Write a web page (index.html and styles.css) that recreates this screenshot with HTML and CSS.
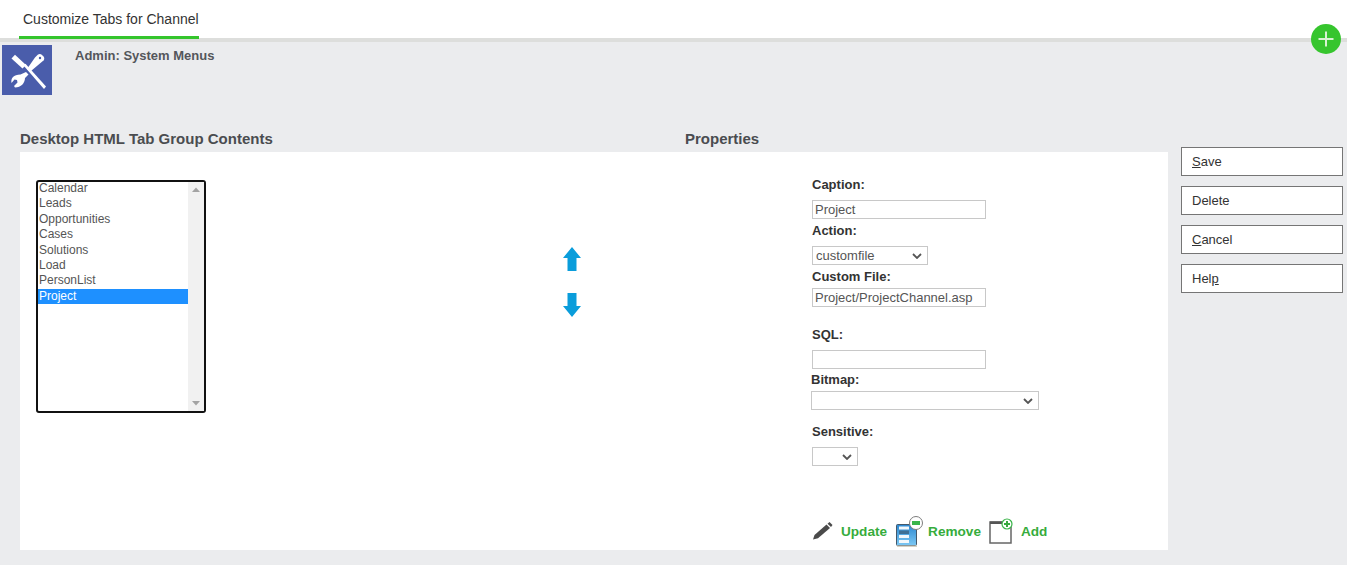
FILE: index.html
```html
<!DOCTYPE html>
<html lang="en">
<head>
<meta charset="utf-8">
<title>Customize Tabs for Channel</title>
<link rel="stylesheet" href="styles.css">
</head>
<body>
<header class="tabbar">
  <div class="tab">Customize Tabs for Channel</div>
  <button class="fab" aria-label="Add"><svg width="30" height="30" viewBox="0 0 30 30"><path d="M15 7.500v15M7.500 15h15" stroke="#d8f3d2" stroke-width="2" fill="none"/></svg></button>
</header>
<div class="context">
  <div class="logo">
    <svg width="50" height="50" viewBox="0 0 50 50">
      <path d="M33 12.500 36 9.500C37.500 8.500 39 9 40 10L41.500 11.500C42.500 12.800 42.500 14 41.500 15.500L27.800 27 25 24 Z" fill="#fff"/>
      <circle cx="38" cy="13" r="1.200" fill="#4a5dab"/>
      <path d="M9.500 13.500 13 9.800 24 20 20.500 23.500Z" fill="#fff"/>
      <path d="M21.500 20.500 23.500 18.800 44 41.500 42 44Z" fill="#fff"/>
      <path d="M24 27 26.500 29.500 23 33C23 38 19 42.500 13 42.500L12 41 15.500 37.500 15 35 12.500 34.500 9.500 38C8.500 33.500 11.500 29.500 18.500 29.500Z" fill="#fff"/>
    </svg>
  </div>
  <div class="crumb">Admin: System Menus</div>
</div>
<div class="columns">
  <main class="main">
    <div class="titles">
      <h2 class="title title-left">Desktop HTML Tab Group Contents</h2>
      <h2 class="title">Properties</h2>
    </div>
    <section class="panel">
      <div class="listbox">
        <ul class="items">
          <li>Calendar</li>
          <li>Leads</li>
          <li>Opportunities</li>
          <li>Cases</li>
          <li>Solutions</li>
          <li>Load</li>
          <li>PersonList</li>
          <li class="selected">Project</li>
        </ul>
        <div class="scrollbar">
          <svg width="16" height="10" viewBox="0 0 16 10"><path d="M8 3.500 12 8H4z" fill="#a3a3a3"/></svg>
          <svg width="16" height="10" viewBox="0 0 16 10"><path d="M8 6.500 12 2H4z" fill="#a3a3a3"/></svg>
        </div>
      </div>
      <div class="arrows">
        <svg width="20" height="24" viewBox="0 0 20 24"><path d="M10 0 19 11H14.500V24H5.500V11H1Z" fill="#0a9ddb"/></svg>
        <svg width="20" height="24" viewBox="0 0 20 24"><path d="M10 24 19 13H14.500V0H5.500V13H1Z" fill="#0a9ddb"/></svg>
      </div>
      <form class="props">
        <label class="label">Caption:</label>
        <input class="field input gap-8" type="text" value="Project">
        <label class="label after-4">Action:</label>
        <select class="field select-action gap-8"><option>customfile</option></select>
        <label class="label after-4">Custom File:</label>
        <input class="field input gap-4" type="text" value="Project/ProjectChannel.asp">
        <label class="label after-20">SQL:</label>
        <input class="field input gap-8" type="text">
        <label class="label after-3 shift">Bitmap:</label>
        <select class="field select-bitmap gap-4 shift"><option></option></select>
        <label class="label after-14">Sensitive:</label>
        <select class="field select-sensitive gap-8"><option></option></select>
        <div class="actions">
          <a class="action action-update">
            <svg width="22" height="20" viewBox="0 0 22 20"><path d="M1 18.500 2.500 14 14.500 3.500 18 7 6 17.300Z" fill="#4a4a4a"/><path d="M15.500 2.700 17.500 1 20.500 4 19 6Z" fill="#4a4a4a"/></svg>
            Update
          </a>
          <a class="action action-remove">
            <svg width="30" height="32" viewBox="0 0 30 32">
              <defs><linearGradient id="rm" x1="0" y1="0" x2="0" y2="1"><stop offset="0" stop-color="#2b87d0"/><stop offset="1" stop-color="#7cc8f4"/></linearGradient></defs>
              <rect x="1.500" y="9.500" width="20" height="21" rx="1" fill="url(#rm)" stroke="#44586a"/>
              <rect x="2" y="30.500" width="20" height="1.500" fill="#d5d2c4"/>
              <path d="M4 11.500h10v3H4zM4 20h10v3H4zM4 25h10v3H4z" fill="#f1f7fb"/>
              <path d="M4 15.500h10v3.500H4z" fill="#3d6f95"/>
              <circle cx="21" cy="8" r="6.500" fill="#fff" stroke="#7d7d7d"/>
              <rect x="17" y="6" width="8" height="4" fill="#39b54a"/>
            </svg>
            Remove
          </a>
          <a class="action action-add">
            <svg width="26" height="28" viewBox="0 0 26 28">
              <rect x="2" y="5" width="21" height="21" fill="#fff" stroke="#666" stroke-width="1.500"/>
              <rect x="2" y="4.500" width="16" height="2.500" fill="#555"/>
              <circle cx="19" cy="7" r="5" fill="#fff" stroke="#3bb54a" stroke-width="1.200"/>
              <path d="M19 4v6M16 7h6" stroke="#36a93f" stroke-width="2"/>
            </svg>
            Add
          </a>
        </div>
      </form>
    </section>
  </main>
  <aside class="buttons">
    <button class="btn"><u>S</u>ave</button>
    <button class="btn">Delete</button>
    <button class="btn"><u>C</u>ancel</button>
    <button class="btn">Hel<u>p</u></button>
  </aside>
</div>
</body>
</html>
```
FILE: styles.css
```css
* { box-sizing: border-box; }
html, body { margin: 0; height: 565px; overflow: hidden; }
body { background: #ebecee; font-family: "Liberation Sans", Arial, sans-serif; color: #333; position: relative; }
.tabbar { height: 42px; background: #fff; border-bottom: 4px solid #dddedc; padding-left: 19px; display: flex; position: relative; }
.tab { width: 180px; height: 39px; line-height: 38px; padding-left: 4px; border-bottom: 3px solid #34c52c; font-size: 14px; color: #333; white-space: nowrap; }
.fab { position: absolute; left: 1311px; top: 24px; width: 30px; height: 30px; border: 0; padding: 0; border-radius: 50%; background: #36c52e; display: block; }
.fab svg { display: block; }
.context { height: 105px; padding: 3px 0 0 2px; display: flex; }
.logo { width: 50px; height: 50px; background: #4a5dab; }
.logo svg { display: block; }
.crumb { margin-left: 23px; margin-top: 3px; font-size: 13px; line-height: 15px; font-weight: bold; color: #54565b; }
.columns { display: flex; }
.main { width: 1168px; padding-left: 20px; }
.titles { display: flex; height: 5px; }
.title { margin: -17px 0 0; font-size: 15px; line-height: 18px; font-weight: bold; color: #4a4c50; height: 18px; }
.title-left { width: 665px; }
.panel { background: #fff; height: 398px; display: flex; align-items: flex-start; padding: 28px 0 0 16px; }
.listbox { width: 170px; height: 233px; border: 2px solid #111; border-radius: 3px; display: flex; background: #fff; font-size: 12px; }
.items { list-style: none; margin: -1px 0 0; padding: 0; width: 150px; }
.items li { height: 15.400px; line-height: 15px; padding-left: 1px; color: #555; white-space: nowrap; }
.items li.selected { background: #1e90ff; color: #fff; }
.scrollbar { width: 16px; background: #f1f1f1; display: flex; flex-direction: column; justify-content: space-between; padding: 2px 0; }
.scrollbar svg { display: block; }
.arrows { margin: 67px 0 0 356px; width: 20px; display: flex; flex-direction: column; gap: 22px; }
.arrows svg { display: block; }
.props { margin: -3px 0 0 230px; width: 330px; display: flex; flex-direction: column; align-items: flex-start; }
.label { font-size: 13px; line-height: 15px; height: 15px; font-weight: bold; color: #333; }
.field { height: 19px; border: 1px solid #c8c8c8; background: #fff; color: #555; font-family: "Liberation Sans", Arial, sans-serif; font-size: 13px; padding: 0 2px; border-radius: 0; outline: none; }
select.field { appearance: none; padding: 0 18px 0 3px; background: #fff url("data:image/svg+xml,%3Csvg xmlns='http://www.w3.org/2000/svg' width='10' height='6'%3E%3Cpath d='M1 1l4 4 4-4' fill='none' stroke='%23555' stroke-width='1.800'/%3E%3C/svg%3E") no-repeat right 5px center; }
.input { width: 174px; }
.select-action { width: 116px; }
.select-bitmap { width: 228px; }
.select-sensitive { width: 46px; }
.shift { margin-left: -1px; }
.gap-8 { margin-top: 8px; }
.gap-4 { margin-top: 4px; }
.after-3 { margin-top: 3px; }
.after-4 { margin-top: 4px; }
.after-14 { margin-top: 14px; }
.after-20 { margin-top: 20px; }
.actions { display: flex; align-items: center; margin-top: 48px; height: 34px; }
.action { display: flex; align-items: center; font-size: 13.600px; font-weight: bold; color: #36ac3c; white-space: nowrap; }
.action svg { display: block; flex: none; }
.action-update svg { margin-right: 7px; }
.action-remove { margin-left: 8px; }
.action-remove svg { margin-right: 3px; }
.action-add { margin-left: 7px; }
.action-add svg { margin-right: 7px; }
.buttons { margin: 0 0 0 13px; display: flex; flex-direction: column; gap: 10px; }
.btn { width: 162px; height: 29px; border: 1px solid #757575; background: #fff; font-family: "Liberation Sans", Arial, sans-serif; font-size: 13px; color: #333; text-align: left; padding: 0 0 0 10px; border-radius: 0; }
```
